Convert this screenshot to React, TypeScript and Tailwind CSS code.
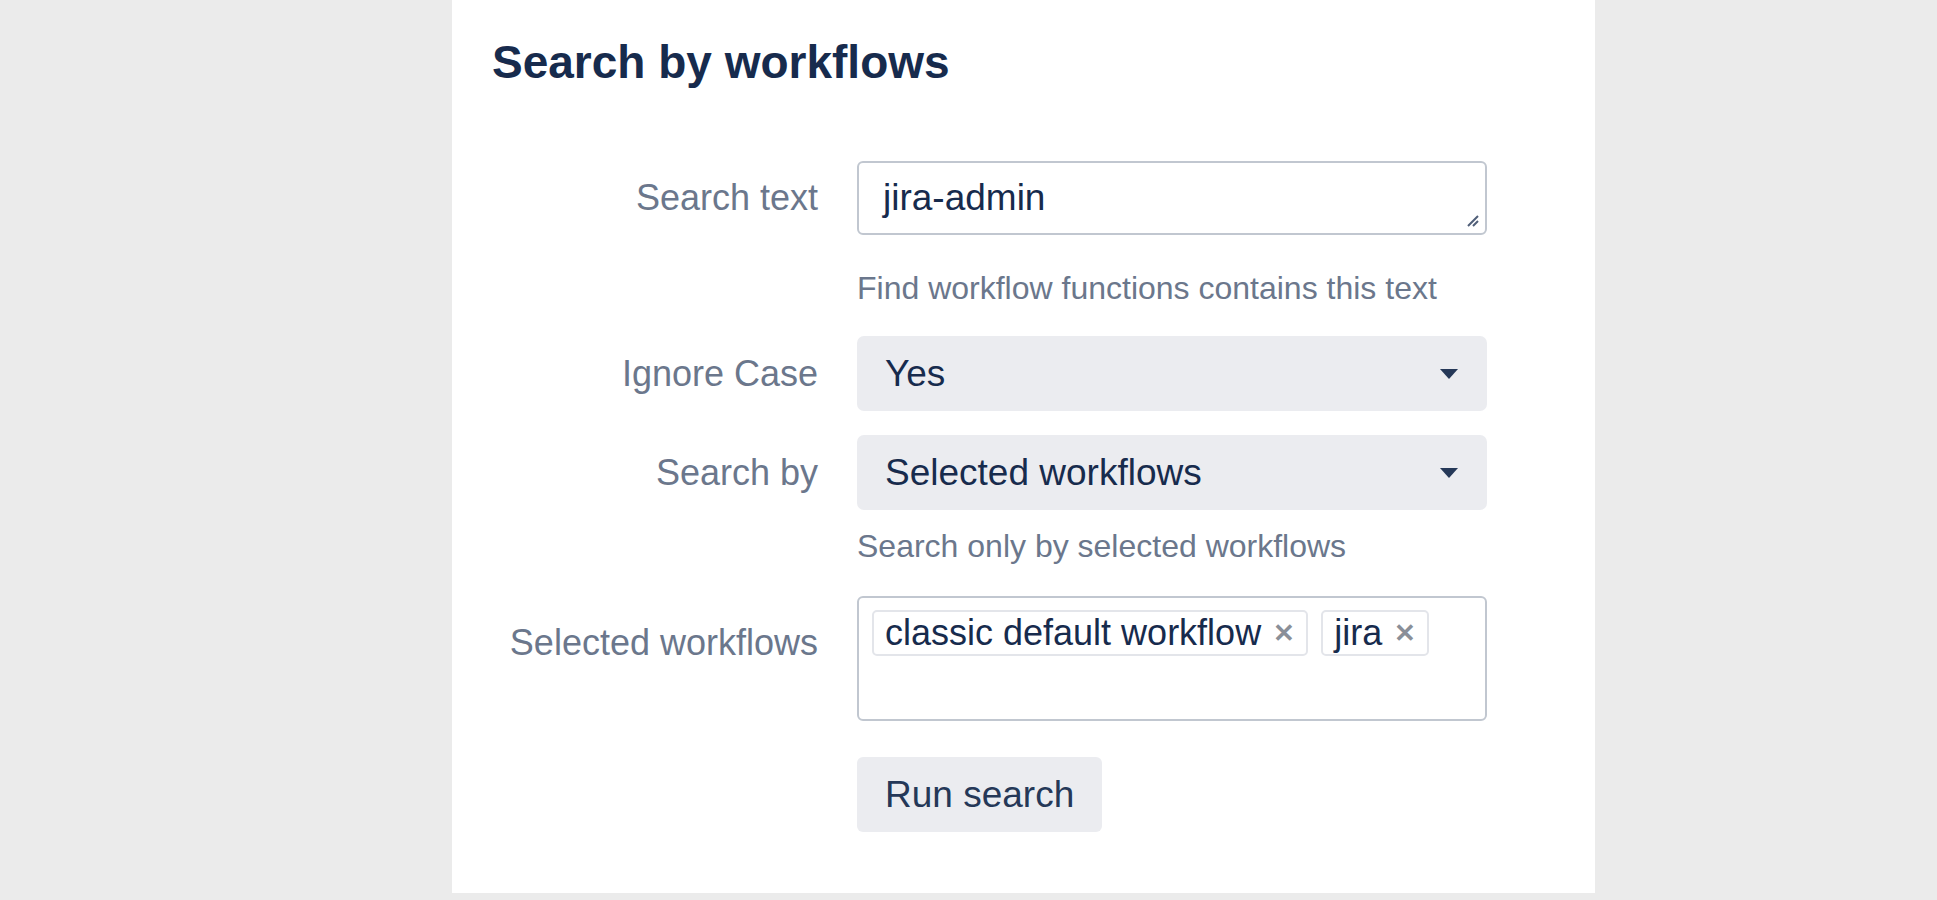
import React from "react";

const font = { fontFamily: '"Liberation Sans", Arial, sans-serif' };

function Caret() {
  return (
    <svg width="20" height="12" viewBox="0 0 20 12" className="shrink-0">
      <path d="M1 1h18L10 11z" fill="#253858" />
    </svg>
  );
}

function Tag({ label }: { label: string }) {
  return (
    <span className="flex h-[46px] items-center gap-3 rounded-[5px] border-2 border-[#e3e5ea] px-[11px] text-[36px] text-[#172b4d]">
      {label}
      <span className="text-[26px] font-bold text-[#8a8f98]">✕</span>
    </span>
  );
}

function Row({ label, children }: { label: string; children: React.ReactNode }) {
  return (
    <div className="flex items-center">
      <div className="w-[326px] text-right text-[36px] text-[#6b778c]">{label}</div>
      <div className="ml-[39px] w-[630px]">{children}</div>
    </div>
  );
}

function Select({ value }: { value: string }) {
  return (
    <div className="flex h-[75px] items-center justify-between rounded-[7px] bg-[#ebecf0] pl-7 pr-7 text-[37px] text-[#172b4d]">
      {value}
      <Caret />
    </div>
  );
}

export default function App() {
  return (
    <div className="flex min-h-[900px] bg-[#ebebeb] pl-[452px]" style={font}>
      <div className="mb-[7px] w-[1143px] bg-white pl-10">
        <h2 className="mt-[37px] text-[46px] font-bold leading-[50px] text-[#172b4d]">Search by workflows</h2>

        <div className="mt-[74px]">
          <Row label="Search text">
            <div className="relative flex h-[74px] items-center rounded-[6px] border-2 border-[#c1c7d0] px-6 text-[37px] text-[#172b4d]">
              jira-admin
              <svg width="14" height="14" viewBox="0 0 14 14" className="absolute bottom-[6px] right-[6px]">
                <path d="M13 3L3 13M13 8L8 13" stroke="#505f79" strokeWidth="2" />
              </svg>
            </div>
          </Row>
        </div>
        <div className="ml-[365px] mt-[36px] text-[32px] leading-[34px] text-[#6b778c]">
          Find workflow functions contains this text
        </div>

        <div className="mt-[31px]">
          <Row label="Ignore Case">
            <Select value="Yes" />
          </Row>
        </div>
        <div className="mt-[24px]">
          <Row label="Search by">
            <Select value="Selected workflows" />
          </Row>
        </div>
        <div className="ml-[365px] mt-[19px] text-[32px] leading-[34px] text-[#6b778c]">
          Search only by selected workflows
        </div>

        <div className="mt-[33px] flex items-start">
          <div className="mt-[20px] w-[326px] text-right text-[36px] text-[#6b778c]">Selected workflows</div>
          <div className="ml-[39px] flex h-[125px] w-[630px] items-start gap-[13px] rounded-[6px] border-2 border-[#c1c7d0] px-[13px] pt-[12px]">
            <Tag label="classic default workflow" />
            <Tag label="jira" />
          </div>
        </div>

        <div className="ml-[365px] mt-[36px]">
          <button className="h-[75px] rounded-[6px] bg-[#ebecf0] px-7 text-[37px] text-[#253858]">Run search</button>
        </div>
      </div>
    </div>
  );
}
